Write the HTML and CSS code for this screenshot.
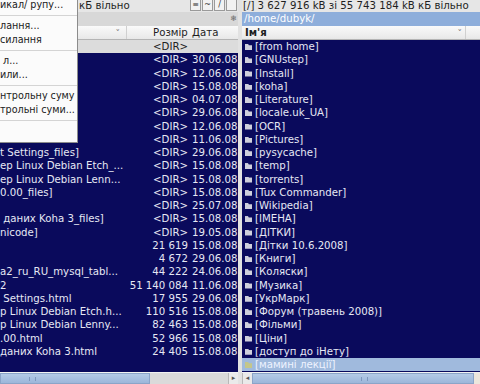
FILE: index.html
```html
<!DOCTYPE html>
<html lang="uk">
<head>
    <meta charset="UTF-8">
    <title>Tux Commander</title>
    <link rel="stylesheet" href="styles.css">
</head>
<body>
    <div class="window">
        <div class="pane pane-left">
            <div class="status">
                <div class="free">кБ вільно</div>
                <div class="quick">
                    <span class="qbtn">≡</span>
                    <span class="qbtn">~</span>
                    <span class="qbtn">/</span>
                    <span class="qbtn"></span>
                </div>
            </div>
            <div class="path path-idle">
                <span class="path-text"></span>
                <span class="bookmark">❄</span>
            </div>
            <div class="head">
                <div class="h-name"><span class="arrow">˅</span></div>
                <div class="h-size">Розмір</div>
                <div class="h-date">Дата</div>
            </div>
            <div class="list list-left">
                <div class="row row-up"><span class="name"></span><span class="size">&lt;DIR&gt;</span><span class="date"></span></div>
                <div class="row"><span class="name"></span><span class="size">&lt;DIR&gt;</span><span class="date">30.06.08</span></div>
                <div class="row"><span class="name"></span><span class="size">&lt;DIR&gt;</span><span class="date">12.06.08</span></div>
                <div class="row"><span class="name"></span><span class="size">&lt;DIR&gt;</span><span class="date">15.08.08</span></div>
                <div class="row"><span class="name"></span><span class="size">&lt;DIR&gt;</span><span class="date">04.07.08</span></div>
                <div class="row"><span class="name"></span><span class="size">&lt;DIR&gt;</span><span class="date">29.06.08</span></div>
                <div class="row"><span class="name"></span><span class="size">&lt;DIR&gt;</span><span class="date">12.06.08</span></div>
                <div class="row"><span class="name"></span><span class="size">&lt;DIR&gt;</span><span class="date">11.06.08</span></div>
                <div class="row"><span class="name">t Settings_files]</span><span class="size">&lt;DIR&gt;</span><span class="date">29.06.08</span></div>
                <div class="row"><span class="name">ep Linux Debian Etch_...</span><span class="size">&lt;DIR&gt;</span><span class="date">15.08.08</span></div>
                <div class="row"><span class="name">ep Linux Debian Lenn...</span><span class="size">&lt;DIR&gt;</span><span class="date">15.08.08</span></div>
                <div class="row"><span class="name">0.00_files]</span><span class="size">&lt;DIR&gt;</span><span class="date">15.08.08</span></div>
                <div class="row"><span class="name"></span><span class="size">&lt;DIR&gt;</span><span class="date">25.07.08</span></div>
                <div class="row"><span class="name">&nbsp;даних Koha 3_files]</span><span class="size">&lt;DIR&gt;</span><span class="date">15.08.08</span></div>
                <div class="row"><span class="name">nicode]</span><span class="size">&lt;DIR&gt;</span><span class="date">19.05.08</span></div>
                <div class="row"><span class="name"></span><span class="size">21 619</span><span class="date">15.08.08</span></div>
                <div class="row"><span class="name"></span><span class="size">4 672</span><span class="date">29.06.08</span></div>
                <div class="row"><span class="name">a2_ru_RU_mysql_tabl...</span><span class="size">44 222</span><span class="date">24.06.08</span></div>
                <div class="row"><span class="name">2</span><span class="size">51 140 084</span><span class="date">11.06.08</span></div>
                <div class="row"><span class="name">&nbsp;Settings.html</span><span class="size">17 955</span><span class="date">29.06.08</span></div>
                <div class="row"><span class="name">p Linux Debian Etch.h...</span><span class="size">110 516</span><span class="date">15.08.08</span></div>
                <div class="row"><span class="name">p Linux Debian Lenny...</span><span class="size">82 463</span><span class="date">15.08.08</span></div>
                <div class="row"><span class="name">.00.html</span><span class="size">52 966</span><span class="date">15.08.08</span></div>
                <div class="row"><span class="name">даних Koha 3.html</span><span class="size">24 405</span><span class="date">15.08.08</span></div>
            </div>
            <div class="hscroll">
                <div class="thumb thumb-left"><span class="grip"></span></div>
                <div class="track"></div>
                <div class="step">▸</div>
            </div>
        </div>

        <div class="divider"></div>

        <div class="pane pane-right">
            <div class="status">
                <div class="free-right">[/] 3 627 916 kB зі 55 743 184 kB кБ вільно</div>
            </div>
            <div class="path path-active">
                <span class="path-text">/home/dubyk/</span>
            </div>
            <div class="head">
                <div class="h-label">Ім'я<span class="arrow">˅</span></div>
                <div class="h-rest"></div>
            </div>
            <div class="list list-right">
                <div class="row"><span class="folder"></span>[from home]</div>
                <div class="row"><span class="folder"></span>[GNUstep]</div>
                <div class="row"><span class="folder"></span>[Install]</div>
                <div class="row"><span class="folder"></span>[koha]</div>
                <div class="row"><span class="folder"></span>[Literature]</div>
                <div class="row"><span class="folder"></span>[locale.uk_UA]</div>
                <div class="row"><span class="folder"></span>[OCR]</div>
                <div class="row"><span class="folder"></span>[Pictures]</div>
                <div class="row"><span class="folder"></span>[pysycache]</div>
                <div class="row"><span class="folder"></span>[temp]</div>
                <div class="row"><span class="folder"></span>[torrents]</div>
                <div class="row"><span class="folder"></span>[Tux Commander]</div>
                <div class="row"><span class="folder"></span>[Wikipedia]</div>
                <div class="row"><span class="folder"></span>[ІМЕНА]</div>
                <div class="row"><span class="folder"></span>[ДІТКИ]</div>
                <div class="row"><span class="folder"></span>[Дітки 10.6.2008]</div>
                <div class="row"><span class="folder"></span>[Книги]</div>
                <div class="row"><span class="folder"></span>[Коляски]</div>
                <div class="row"><span class="folder"></span>[Музика]</div>
                <div class="row"><span class="folder"></span>[УкрМарк]</div>
                <div class="row"><span class="folder"></span>[Форум (травень 2008)]</div>
                <div class="row"><span class="folder"></span>[Фільми]</div>
                <div class="row"><span class="folder"></span>[Ціни]</div>
                <div class="row"><span class="folder"></span>[доступ до іНету]</div>
                <div class="row row-cursor"><span class="folder"></span>[мамині лекції]</div>
            </div>
            <div class="hscroll">
                <div class="step">◂</div>
                <div class="thumb thumb-right"><span class="grip"></span></div>
                <div class="end"></div>
            </div>
        </div>

        <!-- popup menu over the left panel -->
        <div class="menu">
            <div class="item item-first">икал/ рупу...</div>
            <div class="sep"></div>
            <div class="item">лання...</div>
            <div class="item">силання</div>
            <div class="sep"></div>
            <div class="item">&nbsp;л...</div>
            <div class="item">или...</div>
            <div class="sep"></div>
            <div class="item">нтрольну суму</div>
            <div class="item">трольні суми...</div>
            <div class="sep"></div>
        </div>
    </div>
</body>
</html>
```

FILE: styles.css
```css
body, html {
    margin: 0;
    padding: 0;
    height: 100%;
    overflow: hidden;
    background-color: #e6e6e6;
    font-family: "DejaVu Sans", sans-serif;
    font-size: 10.2px;
    color: #1e1e1e;
}
.window {
    position: relative;
    display: flex;
    height: 384px;
}
.pane {
    display: flex;
    flex-direction: column;
    width: 238px;
}
.divider {
    width: 4px;
    background-color: #e2e2e2;
}
.status {
    display: flex;
    height: 12px;
    line-height: 11px;
    white-space: nowrap;
}
.free {
    margin-left: 79px;
}
.free-right {
    padding-left: 1px;
}
.quick {
    display: flex;
    gap: 1px;
    margin-left: auto;
    margin-right: 1px;
}
.qbtn {
    width: 9px;
    height: 10px;
    border: 1px solid #9a9a9a;
    border-top: none;
    background-color: #f2f2f2;
    font-size: 8px;
    line-height: 10px;
    text-align: center;
    color: #333;
}
.path {
    display: flex;
    align-items: center;
    height: 14px;
}
.path-idle {
    background-color: #d8d8d8;
}
.path-active {
    background-color: #8eaedb;
    color: #fff;
}
.path-text {
    padding-left: 2px;
}
.bookmark {
    margin-left: auto;
    width: 9px;
    font-size: 8px;
    color: #666;
    text-align: center;
}
.head {
    display: flex;
    height: 14px;
    line-height: 14px;
    background: linear-gradient(#fafafa, #e8e8e8);
    border-bottom: 1px solid #b4b4b4;
    box-sizing: border-box;
}
.h-name {
    width: 126px;
    text-align: right;
    border-right: 1px solid #d0d0d0;
}
.arrow {
    font-size: 9px;
    color: #777;
    padding-right: 6px;
}
.h-size {
    width: 39px;
    padding-left: 26px;
}
.h-date {
    padding-left: 0;
}
.h-label {
    display: flex;
    justify-content: space-between;
    width: 220px;
    padding-left: 3px;
    font-weight: bold;
    border-right: 1px solid #d0d0d0;
}
.h-label .arrow {
    font-weight: normal;
    padding-right: 3px;
}
.list {
    height: 333px;
    background-color: #0a0a5c;
    color: #e6e8f4;
    border-bottom: 1px solid #f2f2f2;
    overflow: hidden;
}
.row {
    display: flex;
    align-items: center;
    height: 13.25px;
    white-space: nowrap;
}
.name {
    width: 128px;
    line-height: 13px;
    overflow: hidden;
}
.size {
    width: 60px;
    text-align: right;
}
.date {
    margin-left: 4px;
}
.row-up {
    background-color: #dcdcdc;
    color: #222;
}
.list-right .row {
    padding-left: 3px;
}
.folder {
    width: 7px;
    height: 5px;
    margin: 1px 3px 0 0;
    background-color: #cfd0dc;
    border-top: 1px solid #cfd0dc;
    box-sizing: content-box;
    clip-path: polygon(0 0, 40% 0, 55% 20%, 100% 20%, 100% 100%, 0 100%);
}
.row-cursor {
    background-color: #a0badd;
    color: #eef3ff;
}
.row-cursor .folder {
    background-color: #c4c68a;
    border-top-color: #c4c68a;
}
.hscroll {
    display: flex;
    height: 11px;
    background-color: #dadada;
}
.thumb {
    position: relative;
    background: linear-gradient(#b4cae6, #9cb6da);
    border: 1px solid #8ba4c8;
    box-sizing: border-box;
}
.thumb-left {
    width: 150px;
}
.thumb-right {
    width: 222px;
}
.grip {
    position: absolute;
    top: 3px;
    left: 28px;
    width: 5px;
    height: 4px;
    border-left: 1px solid #7f98bd;
    border-right: 1px solid #7f98bd;
}
.thumb-right .grip {
    left: 108px;
}
.track {
    flex: 1;
}
.step {
    width: 9px;
    font-size: 7px;
    line-height: 11px;
    text-align: center;
    color: #555;
    background-color: #eaeaea;
    border-left: 1px solid #b8b8b8;
}
.end {
    flex: 1;
    background-color: #ece6dc;
}
.menu {
    position: absolute;
    top: 0;
    left: 0;
    width: 77px;
    height: 142px;
    background-color: #fbfbfb;
    border-right: 1px solid #8c8c8c;
    border-bottom: 1px solid #8c8c8c;
    overflow: hidden;
    white-space: nowrap;
    font-size: 9.6px;
}
.item {
    height: 14px;
    line-height: 14px;
    color: #1a1a1a;
}
.item-first {
    margin-top: -2px;
}
.sep {
    height: 7px;
    box-sizing: border-box;
    border-bottom: 3px solid #fbfbfb;
    border-top: 3px solid #fbfbfb;
    background-color: #d4d4d4;
}
```
